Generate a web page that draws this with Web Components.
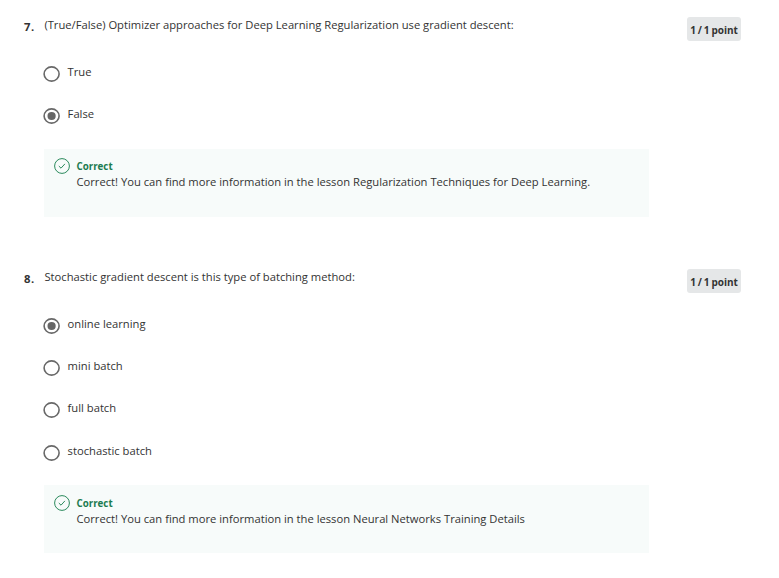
<!DOCTYPE html>
<html lang="en"><head><meta charset="utf-8"><title>Quiz</title>
<style>
body{margin:0;background:#fff;color:#333;font:11.215px/18px "Open Sans",sans-serif;width:779px;height:578px;overflow:hidden}
</style></head><body>
<quiz-question number="7" prompt="(True/False) Optimizer approaches for Deep Learning Regularization use gradient descent:">
<quiz-option>True</quiz-option><quiz-option checked>False</quiz-option>
<quiz-feedback slot="feedback">Correct! You can find more information in the lesson Regularization Techniques for Deep Learning.</quiz-feedback>
</quiz-question>
<quiz-question number="8" prompt="Stochastic gradient descent is this type of batching method:">
<quiz-option checked>online learning</quiz-option><quiz-option>mini batch</quiz-option><quiz-option>full batch</quiz-option><quiz-option>stochastic batch</quiz-option>
<quiz-feedback slot="feedback">Correct! You can find more information in the lesson Neural Networks Training Details</quiz-feedback>
</quiz-question>
<script>
class QuizQuestion extends HTMLElement{
 constructor(){super();this.attachShadow({mode:'open'}).innerHTML=`<style>
:host{display:block;padding:16px 38px 19px 24px}
:host(:last-of-type){padding-bottom:0}
.row{display:grid;grid-template-columns:20px 605px 92px;height:217px}
.num{font-weight:700;font-size:11.3px;letter-spacing:.6px;padding-top:2px}
.prompt{padding-left:.4px}
.badge{margin-left:38px;margin-top:1px;width:54px;height:24px;line-height:26px;background:#e5e7e8;border-radius:3px;text-align:center;font-size:10px;word-spacing:-.7px;font-weight:700;white-space:nowrap}
.opts{display:grid;grid-auto-rows:42.35px;padding-top:28.6px}
</style><div class="row"><div class="num"></div><div><div class="prompt"></div><div class="opts"><slot></slot></div><slot name="feedback"></slot></div><div class="badge">1 / 1 point</div></div>`}
 connectedCallback(){this.shadowRoot.querySelector('.num').textContent=this.getAttribute('number')+'.';this.shadowRoot.querySelector('.prompt').textContent=this.getAttribute('prompt')}
}
class QuizOption extends HTMLElement{
 constructor(){super();this.attachShadow({mode:'open'}).innerHTML=`<style>
:host{display:flex;gap:7.6px;align-items:flex-start}
svg{width:17px;height:16px;flex:none;margin:3px 0 0 -1px}
.dot{display:none}:host([checked]) .dot{display:block}
</style><svg viewBox="0 0 17 16"><ellipse cx="8.6" cy="8" rx="7.5" ry="7.1" fill="none" stroke="#686868" stroke-width="1.6"/><circle class="dot" cx="8.6" cy="8" r="4.1" fill="#666"/></svg><span><slot></slot></span>`}
}
class QuizFeedback extends HTMLElement{
 constructor(){super();this.attachShadow({mode:'open'}).innerHTML=`<style>
:host{display:flex;gap:6.5px;background:#f7fbfa;height:68px;padding:9.4px 10px 0;box-sizing:border-box;margin-top:1.4px}
svg{width:16px;height:16px;flex:none}
.body{line-height:16px}
.title{font-weight:700;color:#1d7c50;font-size:9.75px;line-height:16px;padding-top:1px;margin-bottom:-1px}
</style><svg viewBox="0 0 16 16" fill="none" stroke="#2a8a5c"><circle cx="8" cy="8" r="7.4"/><path d="M4.8 8l2.2 2.2 3.9-4.3"/></svg><div class="body"><div class="title">Correct</div><slot></slot></div>`}
}
customElements.define('quiz-question',QuizQuestion);customElements.define('quiz-option',QuizOption);customElements.define('quiz-feedback',QuizFeedback);
</script></body></html>
